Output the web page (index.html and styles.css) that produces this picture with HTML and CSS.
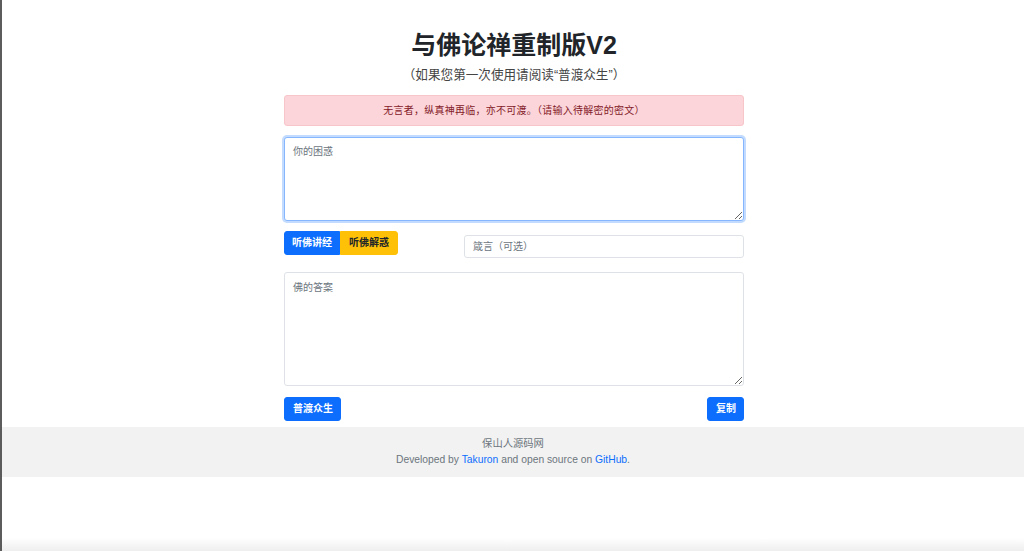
FILE: index.html
```html
<!DOCTYPE html>
<html lang="zh-CN">
<head>
<meta charset="utf-8">
<title>与佛论禅重制版V2</title>
<link rel="stylesheet" href="styles.css">
</head>
<body>
<div class="page">
  <main class="container">
    <h1 class="title">与佛论禅重制版V2</h1>
    <p class="subtitle">（如果您第一次使用请阅读“普渡众生”）</p>
    <div class="alert">无言者，纵真神再临，亦不可渡。（请输入待解密的密文）</div>
    <textarea class="field area-in focused" placeholder="你的困惑"></textarea>
    <div class="controls">
      <div class="btn-group">
        <button class="btn btn-primary btn-left">听佛讲经</button>
        <button class="btn btn-warning btn-right">听佛解惑</button>
      </div>
      <input class="field key-input" type="text" placeholder="箴言（可选）">
    </div>
    <textarea class="field area-out" placeholder="佛的答案"></textarea>
    <div class="actions">
      <button class="btn btn-primary btn-round">普渡众生</button>
      <button class="btn btn-primary btn-round">复制</button>
    </div>
  </main>
  <footer class="footer">
    <div>保山人源码网</div>
    <div>Developed by <a href="#">Takuron</a> and open source on <a href="#">GitHub</a>.</div>
  </footer>
</div>
</body>
</html>
```
FILE: styles.css
```css
* { box-sizing: border-box; }
html, body { margin: 0; padding: 0; }
body {
  width: 1024px;
  height: 551px;
  overflow: hidden;
  font-family: "Liberation Sans", "Noto Sans CJK SC", sans-serif;
  color: #212529;
  background: linear-gradient(to bottom, #ffffff 0, #ffffff 538px, #eeeeee 551px);
}
.page {
  height: 551px;
  border-left: 2px solid #5c5c5c;
}
.container {
  width: 460px;
  margin: 0 auto;
  padding-top: 30px;
  position: relative;
  left: 1px;
}
.title {
  margin: 0;
  text-align: center;
  font-size: 25px;
  line-height: 30px;
  font-weight: 700;
  color: #212529;
}
.subtitle {
  margin: 6px 0 0;
  text-align: center;
  font-size: 12.6px;
  line-height: 18px;
  color: #444;
}
.alert {
  margin-top: 11px;
  height: 31px;
  background: #fbd5d9;
  border: 1px solid #f7c6cb;
  border-radius: 3px;
  color: #842029;
  font-size: 10px;
  letter-spacing: 0.25px;
  line-height: 29px;
  text-align: center;
}
.field {
  display: block;
  width: 100%;
  font-family: "Liberation Sans", "Noto Sans CJK SC", sans-serif;
  font-size: 10px;
  color: #212529;
  background: #fff;
  border: 1px solid #dee2e6;
  border-radius: 3px;
  padding: 6px 8px;
  line-height: 15px;
  outline: none;
}
.field::placeholder { color: #6c757d; opacity: 1; }
.area-in {
  margin-top: 11px;
  height: 84px;
  resize: vertical;
}
.focused {
  border-color: #86b7fe;
  box-shadow: 0 0 0 2px rgba(13, 110, 253, 0.25);
}
.controls {
  margin-top: 10px;
  height: 24px;
  display: grid;
  grid-template-columns: 180px 1fr;
  align-items: start;
}
.btn-group { display: flex; }
.btn {
  height: 24px;
  padding: 0 7px;
  border: 1px solid transparent;
  font-family: "Liberation Sans", "Noto Sans CJK SC", sans-serif;
  font-size: 10px;
  font-weight: 600;
  line-height: 22px;
  white-space: nowrap;
  cursor: pointer;
}
.btn-primary { background: #0d6efd; border-color: #0d6efd; color: #fff; }
.btn-warning { background: #ffc107; border-color: #ffc107; color: #212529; }
.btn-left { border-radius: 3px 0 0 3px; }
.btn-right { border-radius: 0 3px 3px 0; padding: 0 8px; }
.btn-round { border-radius: 3px; }
.actions .btn:first-child { padding: 0 7px 0 8px; }
.actions .btn:last-child { padding: 0 7px 0 8px; }
.key-input {
  margin-top: 4px;
  height: 23px;
  padding: 3px 8px;
}
.area-out {
  margin-top: 17px;
  height: 114px;
  padding-top: 7px;
  resize: vertical;
}
.actions {
  margin-top: 11px;
  display: flex;
  justify-content: space-between;
}
.footer {
  margin-top: 6px;
  height: 50px;
  padding: 9px 0;
  background: #f2f2f2;
  text-align: center;
  font-size: 10.3px;
  line-height: 16px;
  color: #6c757d;
}
.footer a { color: #0d6efd; text-decoration: none; }
```
